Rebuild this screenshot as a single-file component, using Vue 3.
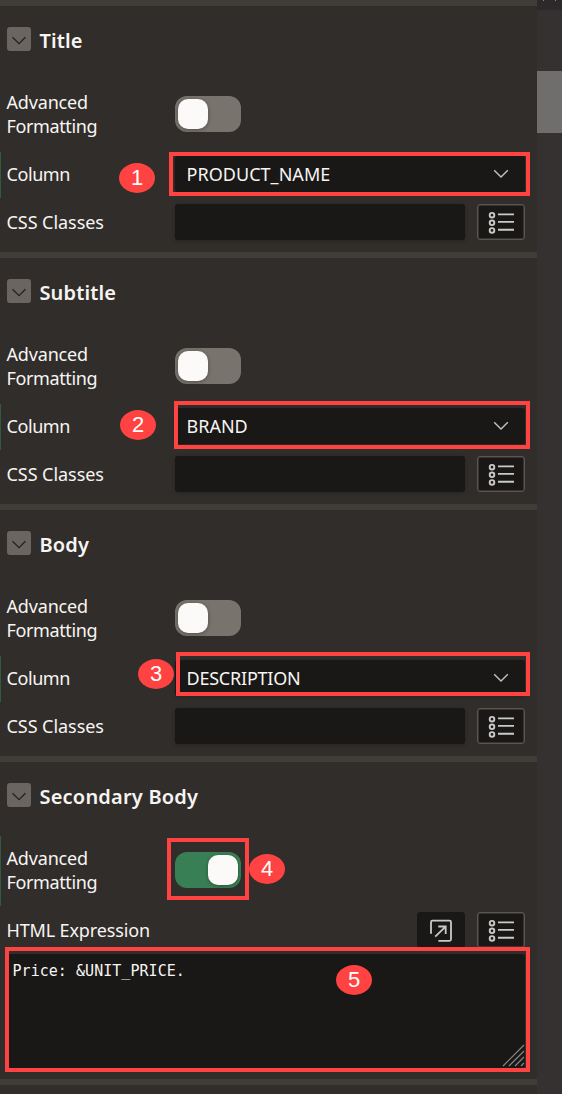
<script setup>
const sections = [
  { key: 'title', name: 'Title', value: 'PRODUCT_NAME', mark: 1 },
  { key: 'subtitle', name: 'Subtitle', value: 'BRAND', mark: 2 },
  { key: 'body', name: 'Body', value: 'DESCRIPTION', mark: 3 },
  { key: 'secondary', name: 'Secondary Body', on: true },
]
</script>

<template>
  <div class="page">
    <main class="panel">
      <section v-for="s in sections" :key="s.key" class="section" :class="s.key">
        <header class="head">
          <span class="collapse">
            <svg width="24" height="24" viewBox="0 0 24 24"><path d="M5.5 10.2 12 16.6 18.5 10.2" fill="none" stroke="#25211f" stroke-width="1.3" /></svg>
          </span>
          <h2>{{ s.name }}</h2>
        </header>
        <div class="row tall" :class="{ changed: s.on }">
          <label class="label"><span class="adv">Advanced</span><br /><span class="fmt">Formatting</span></label>
          <span class="toggle" :class="{ on: s.on }"><i></i></span>
          <template v-if="s.on">
            <span class="frame frame4"></span><span class="mark mark4">4</span>
          </template>
        </div>
        <template v-if="!s.on">
          <div class="row changed">
            <label class="label"><span class="col">Column</span></label>
            <div class="select">
              <span class="value">{{ s.value }}</span>
              <svg width="16" height="10" viewBox="0 0 16 10"><path d="M1.2 1.2 8 8 14.8 1.2" fill="none" stroke="#c4c2c0" stroke-width="1.4" /></svg>
            </div>
            <span class="frame" :class="'frame' + s.mark"></span>
            <span class="mark" :class="'mark' + s.mark">{{ s.mark }}</span>
          </div>
          <div class="row">
            <label class="label"><span class="css">CSS Classes</span></label>
            <div class="input"></div>
            <span class="btn">
              <svg width="26" height="24" viewBox="0 0 26 24" fill="none" stroke="#cbc9c6">
                <g stroke-width="1.9"><circle cx="4" cy="5.2" r="2.3" /><circle cx="4" cy="12.8" r="2.3" /><circle cx="4" cy="20.4" r="2.3" /></g>
                <path d="M10 4.4H26M10 11.9H26M10 19.7H26" stroke-width="1.9" />
              </svg>
            </span>
          </div>
        </template>
        <template v-else>
          <div class="row">
            <label class="label wide"><span class="html">HTML Expression</span></label>
            <span class="btn plain">
              <svg width="24" height="24" viewBox="0 0 24 24" fill="none" stroke="#cbc9c6" stroke-width="1.8">
                <path d="M2 15.8V4.2Q2 2.7 3.5 2.7H20.5Q22 2.7 22 4.2V21.3Q22 22.8 20.5 22.8H9.4M6.2 18.6 16.6 8.7M9.3 8.5H16.7V16" />
              </svg>
            </span>
            <span class="btn">
              <svg width="26" height="24" viewBox="0 0 26 24" fill="none" stroke="#cbc9c6">
                <g stroke-width="1.9"><circle cx="4" cy="5.2" r="2.3" /><circle cx="4" cy="12.8" r="2.3" /><circle cx="4" cy="20.4" r="2.3" /></g>
                <path d="M10 4.4H26M10 11.9H26M10 19.7H26" stroke-width="1.9" />
              </svg>
            </span>
          </div>
          <div class="area">
            <span class="code">Price: &amp;UNIT_PRICE.</span>
            <svg class="grip" width="23" height="23" viewBox="0 0 23 23"><path d="M1 22 22 1M7 22 22 7M13 22 22 13M19 22 22 19" stroke="#8b8987" stroke-width="1.1" /></svg>
            <span class="frame frame5"></span><span class="mark mark5">5</span>
          </div>
        </template>
      </section>
      <div class="section end"></div>
    </main>
    <aside class="scroll">
      <div class="up"><i></i><i></i></div>
      <div class="thumb"></div>
    </aside>
  </div>
</template>

<style>
body { background: #fff; }
</style>

<style scoped>
.page { display: flex; width: 562px; height: 1094px; overflow: hidden; font-family: "Noto Sans", sans-serif; color: #f7f5f3; background: #312d2a; }
.panel { width: 537px; flex: none; }
.section { border-top: 6px solid #403c38; box-sizing: border-box; height: 252px; display: flex; flex-direction: column; }
.secondary { height: 323px; }
.end { height: 20px; }
.head { height: 80px; flex: none; padding: 21px 0 0 7px; box-sizing: border-box; display: flex; gap: 8.5px; }
.collapse { width: 24px; height: 24px; border-radius: 3px; background: #6b6561; }
.collapse svg { display: block; }
h2 { margin: 2px 0 0; font-size: 20px; line-height: 24px; font-weight: 600; letter-spacing: .12px; white-space: nowrap; }
.secondary h2 { letter-spacing: .2px; }
.row { position: relative; height: 48px; flex: none; display: flex; align-items: center; padding-left: 6.5px; }
.tall { height: 64px; box-sizing: border-box; align-items: flex-start; }
.tall .label { padding-top: 4px; }
.tall .toggle { margin-top: 10px; }
.changed::before { content: ""; position: absolute; left: 0; top: 2px; width: 1px; height: 46px; background: #2f5b42; }
.tall.changed::before { top: -6px; height: 70px; }
.label { width: 168.5px; flex: none; font-size: 18px; line-height: 24px; white-space: nowrap; }
.adv { letter-spacing: -.17px; }
.fmt { letter-spacing: -.38px; }
.col { letter-spacing: -.42px; }
.css { letter-spacing: -.05px; }
.html { letter-spacing: -.14px; }
.wide { width: 410.5px; }
.toggle { width: 66px; height: 36px; border-radius: 12px; background: #79736d; box-sizing: border-box; padding: 3px; display: flex; }
.toggle i { width: 30px; height: 30px; border-radius: 10px; background: #fcfaf8; box-shadow: 0 1px 4px #0005; }
.toggle.on { background: #397f56; justify-content: flex-end; }
.select, .input { height: 36px; border-radius: 3px; background: #191816; box-sizing: border-box; box-shadow: 0 1px 4px #0003; }
.select { width: 350px; display: flex; align-items: center; justify-content: space-between; padding: 0 16px 0 11.5px; font-size: 18px; line-height: 24px; }
.title .value { letter-spacing: .04px; }
.body .value { letter-spacing: -.22px; }
.input { width: 290px; }
.btn { width: 48px; height: 36px; margin-left: 12px; border: 1px solid #5b554f; border-radius: 3px; box-sizing: border-box; background: #191816; display: flex; align-items: center; justify-content: center; box-shadow: inset 0 0 0 .5px #5b554f; }
.plain { border-color: #191816; margin-left: 0; box-shadow: none; }
.area { position: relative; height: 114px; margin: 0 12px 0 7px; background: #191816; border-radius: 3px; }
.code { display: block; padding: 7px 0 0 5.5px; font: 15px/20px "DejaVu Sans Mono", monospace; white-space: pre; letter-spacing: .04px; }
.grip { position: absolute; right: 0; bottom: 1px; }
.frame { position: absolute; box-sizing: border-box; border: 4px solid #ff4242; }
.frame1 { left: 169px; top: 2px; width: 361px; height: 44px; }
.frame2 { left: 174px; top: -1px; width: 356px; height: 48px; }
.frame3 { left: 176px; top: -2px; width: 354px; height: 44px; }
.frame4 { left: 167px; top: -4px; width: 82px; height: 62px; }
.frame5 { left: -2px; top: -7px; width: 525px; height: 125px; }
.mark { position: absolute; width: 36px; height: 30px; border-radius: 50%; background: #ff4242; color: #fff; font: 22px/30px "Liberation Sans", sans-serif; text-align: center; }
.mark1 { left: 119px; top: 13px; }
.mark2 { left: 120px; top: 8px; }
.mark3 { left: 138px; top: 5px; }
.mark4 { left: 249px; top: 12px; }
.mark5 { left: 329px; top: 11px; }
.scroll { width: 25px; flex: none; background: #353130; }
.up { height: 10px; background: #2b2929; display: flex; justify-content: space-between; padding: 0 6px; box-sizing: border-box; }
.up i { width: 1px; height: 1px; background: #8a8888; }
.thumb { margin-top: 61px; height: 62px; background: #706e6c; }
</style>
